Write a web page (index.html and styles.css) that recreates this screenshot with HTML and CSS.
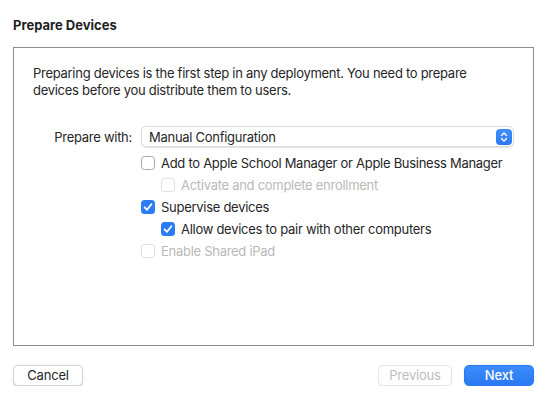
FILE: index.html
```html
<!DOCTYPE html>
<html>
<head>
<meta charset="utf-8">
<link rel="stylesheet" href="styles.css">
</head>
<body>
<div class="dialog">
  <h1 class="title">Prepare Devices</h1>
  <div class="panel">
    <p class="intro">Preparing devices is the first step in any deployment. You need to prepare devices before you distribute them to users.</p>
    <div class="form-row">
      <span class="label">Prepare with:</span>
      <div class="popup">
        <span class="popup-text">Manual Configuration</span>
        <span class="stepper">
          <svg width="16" height="16" viewBox="0 0 16 16"><path d="M5.5 6.5 L8 4 L10.5 6.5 M5.5 9.5 L8 12 L10.5 9.5" fill="none" stroke="#fff" stroke-width="1.4" stroke-linecap="round" stroke-linejoin="round"/></svg>
        </span>
      </div>
    </div>
    <div class="options">
      <div class="check"><span class="box"></span><span class="text">Add to Apple School Manager or Apple Business Manager</span></div>
      <div class="check indent disabled"><span class="box"></span><span class="text">Activate and complete enrollment</span></div>
      <div class="check"><span class="box on"><svg width="14" height="14" viewBox="0 0 14 14"><path d="M3.6 7.3 L6 9.8 L10.4 4.2" fill="none" stroke="#fff" stroke-width="1.8" stroke-linecap="round" stroke-linejoin="round"/></svg></span><span class="text">Supervise devices</span></div>
      <div class="check indent"><span class="box on"><svg width="14" height="14" viewBox="0 0 14 14"><path d="M3.6 7.3 L6 9.8 L10.4 4.2" fill="none" stroke="#fff" stroke-width="1.8" stroke-linecap="round" stroke-linejoin="round"/></svg></span><span class="text">Allow devices to pair with other computers</span></div>
      <div class="check disabled"><span class="box"></span><span class="text">Enable Shared iPad</span></div>
    </div>
  </div>
  <div class="footer">
    <button class="btn">Cancel</button>
    <div class="nav">
      <button class="btn btn-disabled">Previous</button>
      <button class="btn btn-primary">Next</button>
    </div>
  </div>
</div>
</body>
</html>
```

FILE: styles.css
```css
html, body {
  margin: 0;
  padding: 0;
  background: #ffffff;
}
body {
  font-family: Inter, "Liberation Sans", sans-serif;
  font-size: 13px;
  letter-spacing: -0.28px;
  color: #262626;
}
.dialog {
  padding: 17px 16px 0 13px;
  display: flex;
  flex-direction: column;
}
.title {
  margin: 0;
  font-size: 13px;
  font-weight: 700;
  line-height: 16px;
  letter-spacing: 0;
  color: #1f1f1f;
}
.panel {
  margin-top: 14px;
  height: 297px;
  border: 1px solid #8c8c8c;
  padding: 0 19px;
  display: flex;
  flex-direction: column;
}
.intro {
  margin: 17px 0 0 0;
  line-height: 17px;
  font-size: 13px;
}
.form-row {
  margin-top: 27px;
  display: flex;
  align-items: center;
  gap: 9px;
}
.label {
  width: 99px;
  text-align: right;
}
.popup {
  flex: 1;
  height: 19px;
  border: 1px solid #dcdcdc;
  border-radius: 5px;
  box-shadow: 0 0.5px 1px rgba(0,0,0,0.12);
  display: flex;
  align-items: center;
  justify-content: space-between;
  padding: 0 1px 0 7px;
}
.stepper {
  width: 16px;
  height: 16px;
  border-radius: 4px;
  background: linear-gradient(#3f8ffb, #2a79f3);
  display: flex;
}
.options {
  margin-top: 5px;
  margin-left: 108px;
  display: flex;
  flex-direction: column;
}
.check {
  height: 22px;
  display: flex;
  align-items: center;
  gap: 6px;
  white-space: nowrap;
}
.check.indent {
  margin-left: 20px;
}
.box {
  width: 12px;
  height: 12px;
  border: 1px solid #a9a9a9;
  border-radius: 3.5px;
  background: #fff;
  display: flex;
  flex: none;
}
.box.on {
  width: 14px;
  height: 14px;
  border: none;
  background: #2c7cf6;
}
.check.disabled .box {
  border-color: #dedede;
}
.check.disabled .text {
  color: #b9b9b9;
}
.footer {
  margin-top: 19px;
  display: flex;
  justify-content: space-between;
  align-items: center;
}
.nav {
  display: flex;
  gap: 12px;
}
.btn {
  font-family: inherit;
  font-size: 13px;
  letter-spacing: -0.2px;
  height: 21px;
  width: 70px;
  padding: 0;
  border: 0.5px solid #d4d4d4;
  border-radius: 5px;
  background: #fff;
  color: #262626;
  box-shadow: 0 0.5px 1.5px rgba(0,0,0,0.18);
  line-height: 19px;
}
.btn-disabled {
  width: 74px;
  color: #bdbdbd;
  border-color: #e6e6e6;
  box-shadow: 0 0.5px 1px rgba(0,0,0,0.06);
}
.btn-primary {
  background: linear-gradient(#3a8cfb, #2b78f2);
  border-color: #2b78f2;
  color: #fff;
  font-weight: 500;
}
```
